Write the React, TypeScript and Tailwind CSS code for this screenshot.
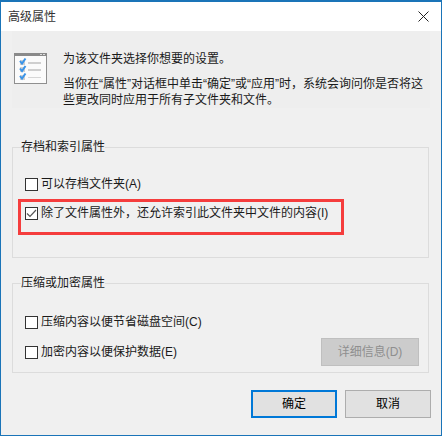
const FONT = "font-['Liberation_Sans','Noto_Sans_CJK_SC',sans-serif]";

function Checkbox({ checked = false }: { checked?: boolean }) {
  return (
    <span className="flex h-[13px] w-[13px] shrink-0 items-center justify-center border border-[#333] bg-white">
      {checked && (
        <svg width="11" height="11" viewBox="0 0 11 11" fill="none">
          <path d="M1 5.5 L4 8.5 L10 2" stroke="#555" strokeWidth="1.2" />
        </svg>
      )}
    </span>
  );
}

function CheckRow({ label, checked }: { label: string; checked?: boolean }) {
  return (
    <label className="flex h-[18px] items-center gap-[3px] whitespace-nowrap">
      <Checkbox checked={checked} />
      <span>{label}</span>
    </label>
  );
}

function TaskIcon() {
  return (
    <svg width="33" height="31" viewBox="0 0 33 31" className="shrink-0">
      <rect x="0.5" y="0.5" width="32" height="30" fill="#fbfbfb" stroke="#8f8f8f" />
      <rect x="0" y="0" width="33" height="3" fill="#8a8a8a" />
      <rect x="26" y="1" width="2" height="1" fill="#ddd" />
      <rect x="29" y="1" width="2" height="1" fill="#ddd" />
      <rect x="6" y="7" width="5" height="5" fill="#d0d0d0" />
      <rect x="6" y="14" width="5" height="5" fill="#d0d0d0" />
      <rect x="6" y="22" width="5" height="5" fill="#d0d0d0" />
      <path d="M6 8 L8 10.5 L11.5 5.5" stroke="#3a94e8" strokeWidth="2" fill="none" />
      <path d="M6 15.5 L8 18 L11.5 13" stroke="#3a94e8" strokeWidth="2" fill="none" />
      <path d="M6 23 L8 25.5 L11.5 20.5" stroke="#3a94e8" strokeWidth="2" fill="none" />
      <rect x="14" y="9" width="13" height="2" fill="#cfcfcf" />
      <rect x="14" y="16" width="13" height="2" fill="#cfcfcf" />
      <rect x="14" y="24" width="13" height="1" fill="#d6d6d6" />
    </svg>
  );
}

export default function App() {
  return (
    <div className={`${FONT} h-[437px] w-[442px] bg-white text-xs text-[#1a1a1a]`}>
      <div className="flex h-[436px] flex-col border border-t-2 border-[#1a74b8] bg-[#f0f0f0]">
        <div className="flex h-[29px] shrink-0 items-center justify-between bg-white pl-[7px] pr-[12px]">
          <span className="text-[#333]">高级属性</span>
          <svg width="11" height="11" viewBox="0 0 11 11" fill="none">
            <path d="M0.5 0.5 L10.5 10.5 M10.5 0.5 L0.5 10.5" stroke="#222" strokeWidth="1" />
          </svg>
        </div>

        <div className="flex flex-col px-[11px]">
          <div className="flex gap-[16px] bg-[#eeeeee] pl-[2px] pt-[22px]">
            <TaskIcon />
            <div className="-mt-[2px] leading-[16px]">
              <p>为该文件夹选择你想要的设置。</p>
              <p className="mt-[9px]">
                当你在“属性”对话框中单击“确定”或“应用”时，系统会询问你是否将这
                <br />
                些更改同时应用于所有子文件夹和文件。
              </p>
            </div>
          </div>

          <fieldset className="mt-[31px] h-[119px] w-[417px] border border-[#dcdcdc] pl-[5px]">
            <legend className="ml-[3px] leading-[16px]">存档和索引属性</legend>
            <div className="pl-[7px] pt-[20px]">
              <CheckRow label="可以存档文件夹(A)" />
            </div>
            <div className="mt-[6px] flex h-[36px] w-[326px] items-start border-[3px] border-[#f53d3d] pl-[4px] pt-[2px]">
              <CheckRow checked label="除了文件属性外，还允许索引此文件夹中文件的内容(I)" />
            </div>
          </fieldset>

          <fieldset className="mt-[17px] h-[98px] w-[417px] border border-[#dcdcdc] pl-[12px]">
            <legend className="-ml-[4px] leading-[16px]">压缩或加密属性</legend>
            <div className="flex flex-col gap-[12px] pt-[22px]">
              <CheckRow label="压缩内容以便节省磁盘空间(C)" />
              <div className="flex h-[18px] items-center justify-between pr-[9px]">
                <CheckRow label="加密内容以便保护数据(E)" />
                <button className="h-[28px] w-[98px] shrink-0 border border-[#bfbfbf] bg-[#cccccc] text-[#8f8f8f]">
                  详细信息(D)
                </button>
              </div>
            </div>
          </fieldset>

          <div className="mt-[17px] flex w-[419px] justify-end gap-[8px]">
            <button className="h-[28px] w-[86px] border-2 border-[#0078d7] bg-[#e1e1e1] text-black">确定</button>
            <button className="h-[28px] w-[86px] border border-[#adadad] bg-[#e1e1e1] text-black">取消</button>
          </div>
        </div>
      </div>
    </div>
  );
}
